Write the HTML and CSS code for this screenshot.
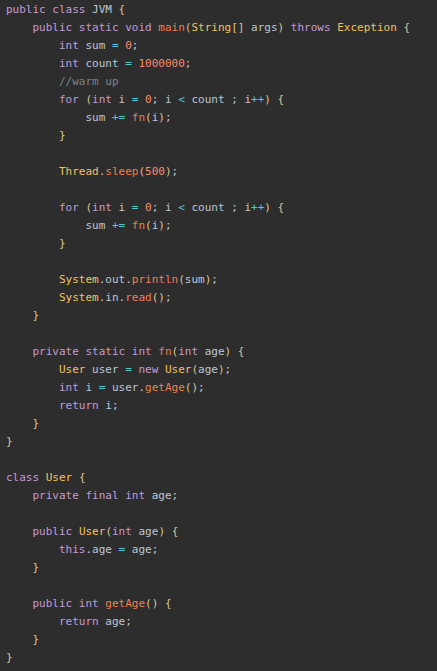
FILE: index.html
```html
<!DOCTYPE html>
<html>
<head>
<meta charset="utf-8">
<link rel="stylesheet" href="styles.css">
</head>
<body>
<pre class="code"><span class="k">public class</span> JVM <span class="b">{</span>
    <span class="k">public static void</span> <span class="f">main</span><span class="b">(</span><span class="t">String</span><span class="b">[]</span> args<span class="b">)</span> <span class="k">throws</span> <span class="t">Exception</span> <span class="b">{</span>
        <span class="k">int</span> sum <span class="o">=</span> <span class="n">0</span>;
        <span class="k">int</span> count <span class="o">=</span> <span class="n">1000000</span>;
        <span class="c">//warm up</span>
        <span class="k">for</span> <span class="b">(</span><span class="k">int</span> i <span class="o">=</span> <span class="n">0</span>; i <span class="o">&lt;</span> count ; i<span class="o">++</span><span class="b">)</span> <span class="b">{</span>
            sum <span class="o">+=</span> <span class="f">fn</span><span class="b">(</span>i<span class="b">)</span>;
        <span class="b">}</span>

        <span class="t">Thread</span>.<span class="f">sleep</span><span class="b">(</span><span class="n">500</span><span class="b">)</span>;

        <span class="k">for</span> <span class="b">(</span><span class="k">int</span> i <span class="o">=</span> <span class="n">0</span>; i <span class="o">&lt;</span> count ; i<span class="o">++</span><span class="b">)</span> <span class="b">{</span>
            sum <span class="o">+=</span> <span class="f">fn</span><span class="b">(</span>i<span class="b">)</span>;
        <span class="b">}</span>

        <span class="t">System</span>.out.<span class="f">println</span><span class="b">(</span>sum<span class="b">)</span>;
        <span class="t">System</span>.in.<span class="f">read</span><span class="b">()</span>;
    <span class="b">}</span>

    <span class="k">private static int</span> <span class="f">fn</span><span class="b">(</span><span class="k">int</span> age<span class="b">)</span> <span class="b">{</span>
        <span class="t">User</span> user <span class="o">=</span> <span class="k">new</span> <span class="t">User</span><span class="b">(</span>age<span class="b">)</span>;
        <span class="k">int</span> i <span class="o">=</span> user.<span class="f">getAge</span><span class="b">()</span>;
        <span class="k">return</span> i;
    <span class="b">}</span>
<span class="b">}</span>

<span class="k">class</span> <span class="t">User</span> <span class="b">{</span>
    <span class="k">private final int</span> age;

    <span class="k">public</span> <span class="t">User</span><span class="b">(</span><span class="k">int</span> age<span class="b">)</span> <span class="b">{</span>
        <span class="k">this</span>.age <span class="o">=</span> age;
    <span class="b">}</span>

    <span class="k">public int</span> <span class="f">getAge</span><span class="b">()</span> <span class="b">{</span>
        <span class="k">return</span> age;
    <span class="b">}</span>
<span class="b">}</span></pre>
</body>
</html>
```
FILE: styles.css
```css
html, body {
  margin: 0;
  padding: 0;
  background: #2d2d2d;
  height: 100%;
}
.code {
  margin: 0;
  padding: 1px 6px 0 6px;
  font-family: "DejaVu Sans Mono", "Liberation Mono", monospace;
  font-size: 11px;
  line-height: 18px;
  color: #bcc6d3;
  white-space: pre;
}
.k { color: #c39ad6; }
.t { color: #f2c061; }
.f { color: #ef7d4f; }
.n { color: #f78c6c; }
.o { color: #56c8d8; }
.c { color: #7c828d; }
.b { color: #d8c48f; }
```
